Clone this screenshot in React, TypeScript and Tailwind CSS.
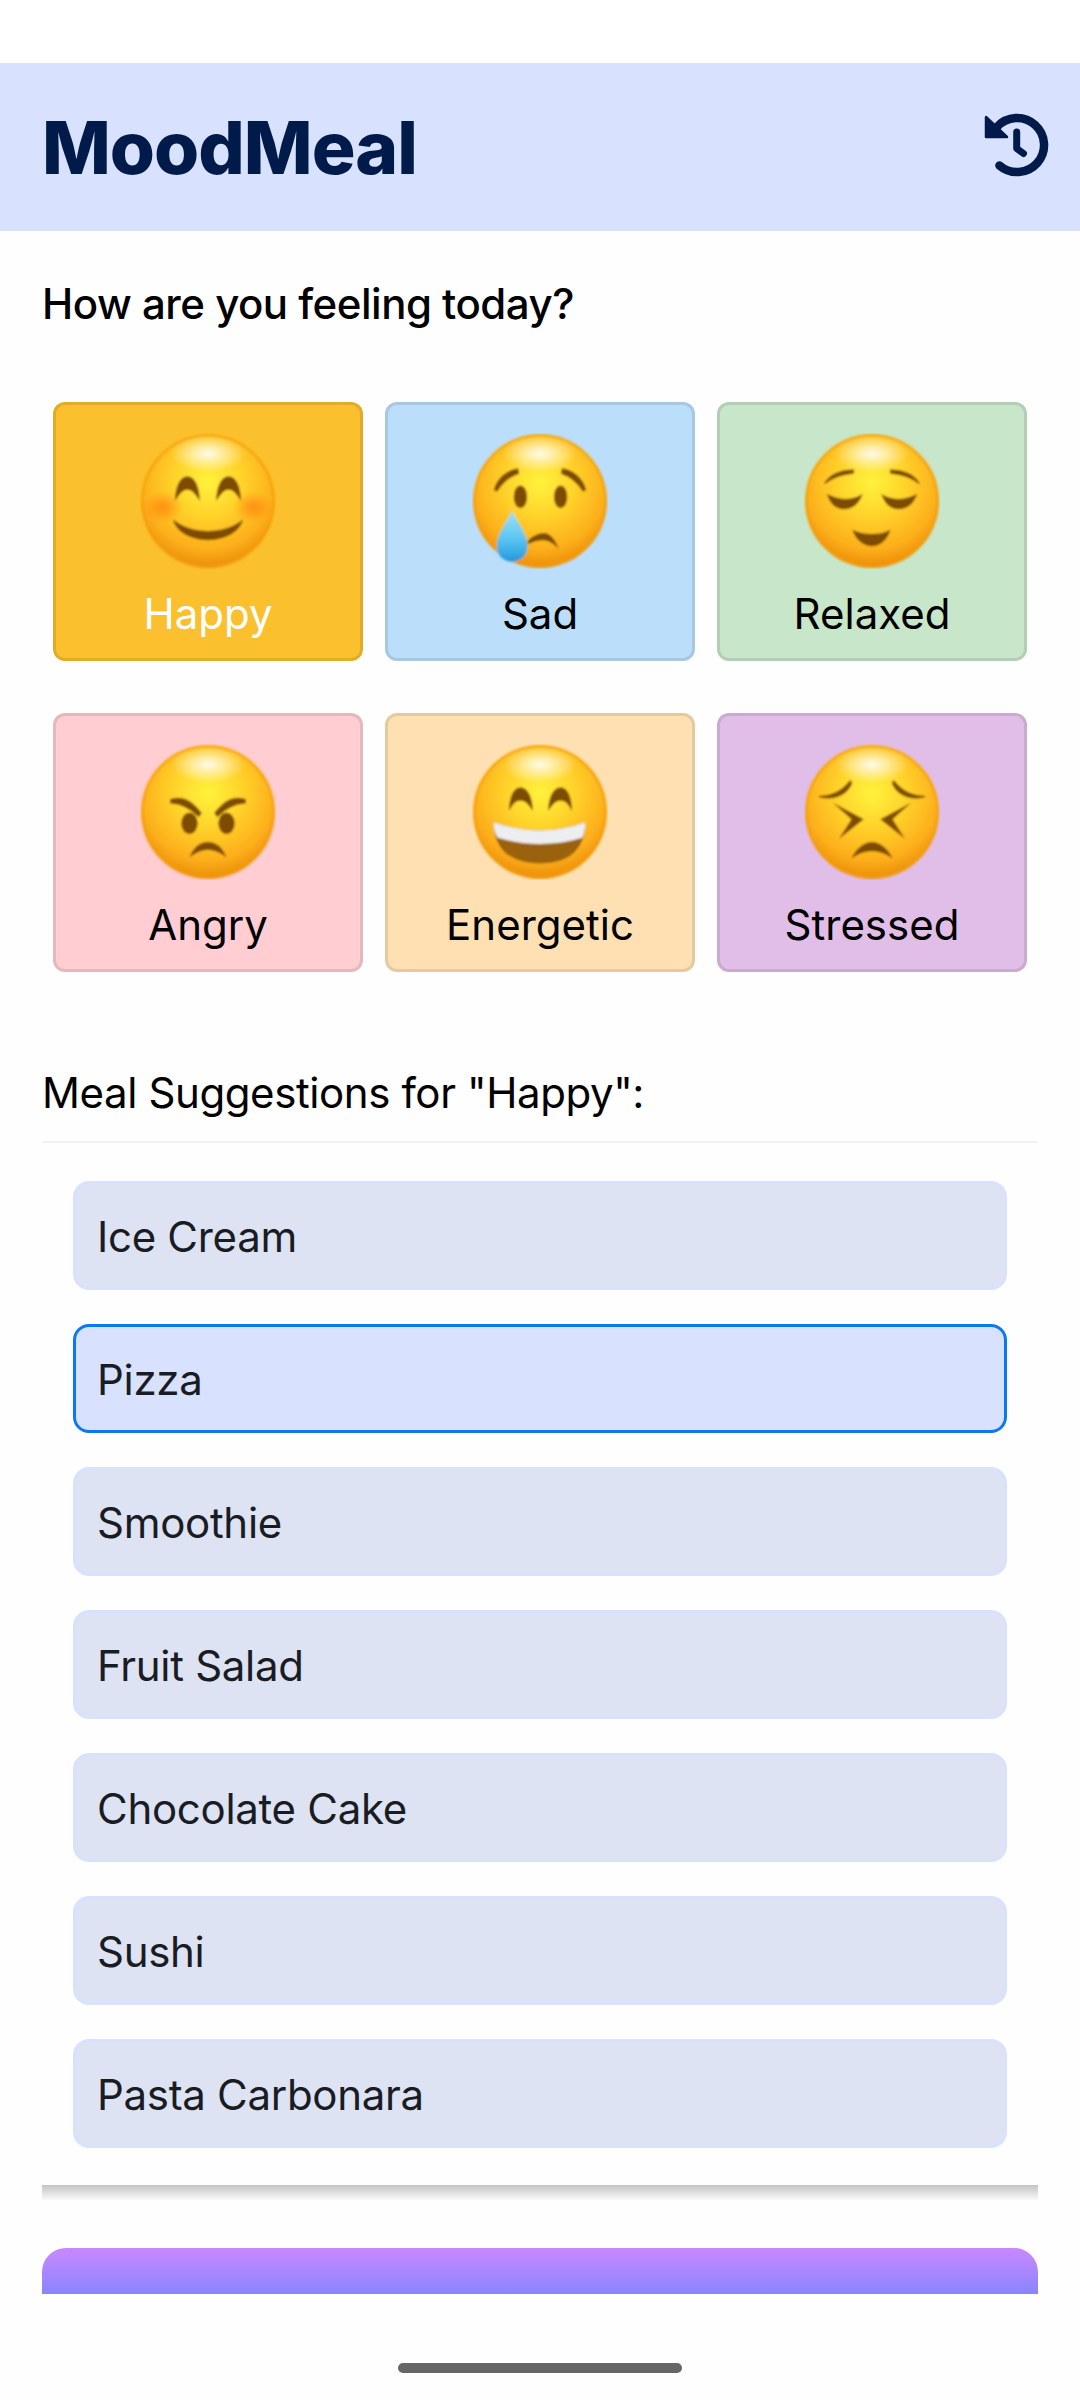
const INTER = "font-['Inter','Noto_Sans',sans-serif]";

function Defs() {
  return (
    <svg width="0" height="0" className="absolute">
      <defs>
        <radialGradient id="face" cx="50%" cy="36%" r="66%">
          <stop offset="0" stopColor="#fff23c" />
          <stop offset="0.35" stopColor="#ffd62c" />
          <stop offset="0.75" stopColor="#fdb01c" />
          <stop offset="1" stopColor="#e88804" />
        </radialGradient>
        <radialGradient id="shine">
          <stop offset="0" stopColor="#fff" stopOpacity="0.9" />
          <stop offset="0.5" stopColor="#fff" stopOpacity="0.45" />
          <stop offset="1" stopColor="#fff" stopOpacity="0" />
        </radialGradient>
        <radialGradient id="blush">
          <stop offset="0" stopColor="#ff8810" stopOpacity="0.85" />
          <stop offset="1" stopColor="#ff8810" stopOpacity="0" />
        </radialGradient>
        <linearGradient id="tear" x1="0" y1="0" x2="0" y2="1">
          <stop offset="0" stopColor="#9fe3f7" />
          <stop offset="0.55" stopColor="#5cc6f2" />
          <stop offset="1" stopColor="#2297dd" />
        </linearGradient>
        <filter id="soft" x="-5%" y="-5%" width="110%" height="110%">
          <feGaussianBlur stdDeviation="0.8" />
        </filter>
      </defs>
    </svg>
  );
}

const INK = "#7f4c06";

function Face({ children }: { children?: React.ReactNode }) {
  return (
    <svg viewBox="0 0 132 132" className="w-[136px] h-[136px]">
      <g filter="url(#soft)">
        <circle cx="66" cy="66" r="65" fill="url(#face)" />
        <ellipse cx="66" cy="20" rx="36" ry="18" fill="url(#shine)" />
        <circle cx="66" cy="66" r="63.5" fill="none" stroke="#f59e0c" strokeWidth="2.5" strokeOpacity="0.7" />
        {children}
      </g>
    </svg>
  );
}

function Emoji({ kind }: { kind: string }) {
  if (kind === "happy")
    return (
      <Face>
        <ellipse cx="22" cy="72" rx="20" ry="15" fill="url(#blush)" />
        <ellipse cx="110" cy="72" rx="20" ry="15" fill="url(#blush)" />
        <path d="M34 66c0-16 6-24 12-24s12 8 12 24c-5-8-8-11-12-11s-7 3-12 11z" fill={INK} />
        <path d="M74 66c0-16 6-24 12-24s12 8 12 24c-5-8-8-11-12-11s-7 3-12 11z" fill={INK} />
        <path d="M32 84c10 8 22 11 34 11s24-3 34-11c-3 12-17 20-34 20s-31-8-34-20z" fill={INK} />
      </Face>
    );
  if (kind === "sad")
    return (
      <Face>
        <path d="M22 55c3-11 12-18 22-20l1 4c-9 3-15 8-21 17z" fill={INK} stroke={INK} strokeWidth="1.5" strokeLinejoin="round" />
        <path d="M110 55c-3-11-12-18-22-20l-1 4c9 3 15 8 21 17z" fill={INK} stroke={INK} strokeWidth="1.5" strokeLinejoin="round" />
        <ellipse cx="47" cy="62" rx="6.5" ry="11" fill={INK} />
        <ellipse cx="86" cy="62" rx="6.5" ry="11" fill={INK} />
        <path d="M54 105c4-5 11-8 16-8s11 6 14 15c-5-5-10-8-15-8s-9 1-15 4z" fill={INK} />
        <path d="M39 75c3 9 15 22 15 35 0 9-7 15-15 15s-15-6-15-15c0-13 12-26 15-35z" fill="url(#tear)" />
      </Face>
    );
  if (kind === "relaxed")
    return (
      <Face>
        <path d="M20 49c5-8 15-13 28-13v3c-11 1-20 4-28 10z" fill={INK} stroke={INK} strokeWidth="1" />
        <path d="M112 49c-5-8-15-13-28-13v3c11 1 20 4 28 10z" fill={INK} stroke={INK} strokeWidth="1" />
        <path d="M22 59c8 4 13 5 18 5s11-1 17-5c-3 9-9 15-18 15s-14-6-17-15z" fill={INK} />
        <path d="M75 59c6 4 12 5 17 5s10-1 18-5c-3 9-9 15-18 15s-14-6-17-15z" fill={INK} />
        <path d="M47 94c6 3 12 4 19 4s12-1 18-4c-3 10-10 16-18 16s-16-6-19-16z" fill={INK} />
      </Face>
    );
  if (kind === "angry")
    return (
      <Face>
        <path d="M30 54c11-3 19 0 29 13l-2 3C49 62 41 58 30 57z" fill={INK} stroke={INK} strokeWidth="1.5" strokeLinejoin="round" />
        <path d="M102 54c-11-3-19 0-29 13l2 3c8-8 16-12 27-13z" fill={INK} stroke={INK} strokeWidth="1.5" strokeLinejoin="round" />
        <ellipse cx="48" cy="77" rx="8" ry="10.5" fill={INK} />
        <ellipse cx="84" cy="77" rx="8" ry="10.5" fill={INK} />
        <path d="M48 110c4-10 10-15 18-15s14 5 18 15c-7-5-12-7-18-7s-11 2-18 7z" fill={INK} />
      </Face>
    );
  if (kind === "energetic")
    return (
      <Face>
        <path d="M36 65c0-15 5-23 11-23s12 8 12 23c-5-8-8-10-12-10s-7 2-11 10z" fill={INK} />
        <path d="M74 65c0-15 6-23 12-23s11 8 11 23c-4-8-7-10-11-10s-7 2-12 10z" fill={INK} />
        <path d="M21 76c14 5 30 8 45 8s31-3 44-8c0 30-20 40-44 40s-45-10-45-40z" fill="#9b620a" />
        <path d="M21 76c14 5 30 8 45 8s31-3 44-8c0 6-1 11-3 15-13 4-27 6-41 6s-28-2-41-6c-3-4-4-9-4-15z" fill="#eceef0" />
      </Face>
    );
  return (
    <Face>
      <path d="M15 51c13 0 23-6 30-15l1 2c-4 10-16 17-31 13z" fill={INK} stroke={INK} strokeWidth="1.5" strokeLinejoin="round" />
      <path d="M117 51c-13 0-23-6-30-15l-1 2c4 10 16 17 31 13z" fill={INK} stroke={INK} strokeWidth="1.5" strokeLinejoin="round" />
      <path d="M28 57L58 73L34 92L46 73z" fill={INK} />
      <path d="M104 57L74 73L98 92L86 73z" fill={INK} />
      <path d="M46 111c5-10 12-16 20-16s15 6 20 16c-7-5-13-7-20-7s-13 2-20 7z" fill={INK} />
    </Face>
  );
}

const moods = [
  { name: "Happy", kind: "happy", bg: "bg-[#fbc02d]", text: "text-white" },
  { name: "Sad", kind: "sad", bg: "bg-[#bbdefb]", text: "text-black" },
  { name: "Relaxed", kind: "relaxed", bg: "bg-[#c8e6c9]", text: "text-black" },
  { name: "Angry", kind: "angry", bg: "bg-[#ffcdd2]", text: "text-black" },
  { name: "Energetic", kind: "energetic", bg: "bg-[#ffe0b2]", text: "text-black" },
  { name: "Stressed", kind: "stressed", bg: "bg-[#e1bee7]", text: "text-black" },
];

const meals = ["Ice Cream", "Pizza", "Smoothie", "Fruit Salad", "Chocolate Cake", "Sushi", "Pasta Carbonara"];

export default function App() {
  return (
    <div className={`w-[1080px] h-[2400px] bg-[#fefefe] relative overflow-hidden flex flex-col ${INTER}`}>
      <Defs />
      <div className="h-[63px] bg-white" />
      <header className="h-[168px] bg-[#d8e2ff] flex items-center justify-between pl-[42px] pr-[27px]">
        <h1 className="text-[73px] leading-none font-extrabold tracking-[-1px] text-[#001a4a]">MoodMeal</h1>
        <svg viewBox="0 0 70 70" className="w-[70px] h-[70px] mb-[4px]" fill="none" stroke="#001a4a">
          <path d="M16.4 55.5A27 27 0 1 0 14 17" strokeWidth="8.5" strokeLinecap="round" />
          <path d="M3 7V27H24z" fill="#001a4a" strokeWidth="2.5" strokeLinejoin="round" />
          <path d="M33.7 22V38.5L40.5 43.5" strokeWidth="7" strokeLinecap="round" strokeLinejoin="round" />
        </svg>
      </header>
      <h2 className="mt-[45px] ml-[42px] text-[42px] leading-[56px] font-medium tracking-[-0.5px] text-black">How are you feeling today?</h2>
      <div className="mt-[70px] ml-[53px] grid grid-cols-[310px_310px_310px] gap-x-[22px] gap-y-[52px]">
        {moods.map((m) => (
          <div key={m.name} className={`h-[259px] rounded-[12px] border-[3px] border-black/10 flex flex-col items-center pt-[28px] ${m.bg}`}>
            <Emoji kind={m.kind} />
            <span className={`mt-[19px] text-[42px] leading-[52px] ${m.text}`}>{m.name}</span>
          </div>
        ))}
      </div>
      <h3 className="mt-[93px] ml-[42px] text-[42px] leading-[56px] tracking-[-0.4px] text-black">Meal Suggestions for "Happy":</h3>
      <div className="mx-[42px] mt-[20px] h-[2px] bg-[#f2f2f2]" />
      <ul className="mt-[38px] ml-[73px] w-[934px] flex flex-col gap-[34px]">
        {meals.map((m) => (
          <li
            key={m}
            className={
              m === "Pizza"
                ? "h-[109px] rounded-[16px] border-[3px] border-[#0a78f5] bg-[#d8e2ff] flex items-center pl-[21px] pt-[2px] text-[42px] text-[#1a1c24] tracking-[-0.3px]"
                : "h-[109px] rounded-[16px] border-[3px] border-[#d8e2ff] bg-[#dde3f3] flex items-center pl-[21px] pt-[2px] text-[42px] text-[#1a1c24] tracking-[-0.3px]"
            }
          >
            {m}
          </li>
        ))}
      </ul>
      <div className="mx-[42px] mt-[37px] h-[16px] bg-gradient-to-b from-[#c4c4c4] to-[#fefefe]" />
      <div className="mx-[42px] mt-[47px] h-[46px] rounded-t-[24px] bg-gradient-to-b from-[#c988ff] to-[#8884ff]" />
      <div className="mx-auto mt-[69px] w-[284px] h-[10px] rounded-full bg-[#666666]" />
    </div>
  );
}
